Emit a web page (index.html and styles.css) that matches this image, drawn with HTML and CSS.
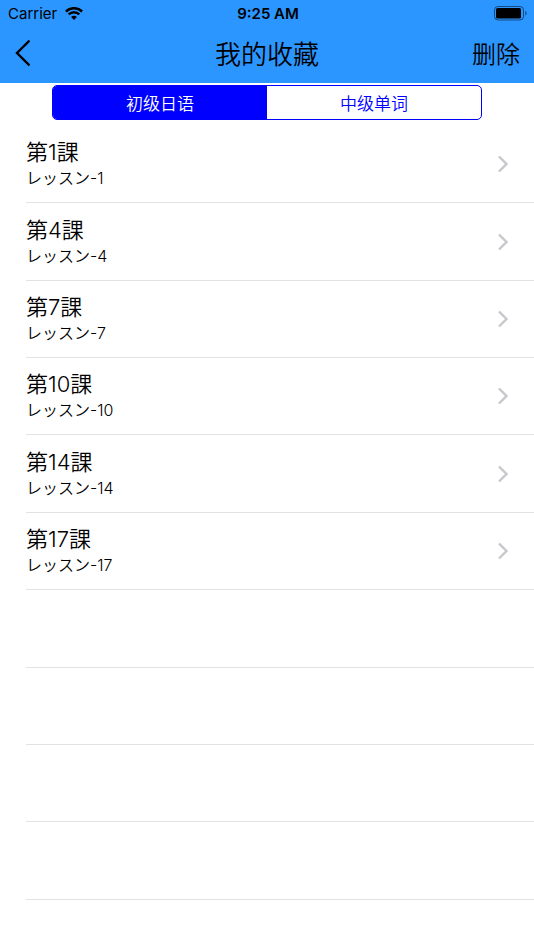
FILE: index.html
```html
<!DOCTYPE html>
<html lang="zh-CN">
<head>
<meta charset="utf-8">
<meta name="viewport" content="width=device-width, initial-scale=1">
<title>我的收藏</title>
<link rel="stylesheet" href="styles.css">
</head>
<body>
<header class="top">
  <div class="status">
    <div class="carrier">
      <span>Carrier</span>
      <svg class="wifi" viewBox="0 0 18 13" aria-hidden="true">
        <path d="M.9 4.5a11.6 11.6 0 0 1 16.2 0M3.7 7.4a7.6 7.6 0 0 1 10.6 0" fill="none" stroke="#000" stroke-width="2.5"/>
        <path d="M6.1 10a4 4 0 0 1 5.8 0L9 12.9z"/>
      </svg>
    </div>
    <span class="time">9:25 AM</span>
    <svg class="battery" viewBox="0 0 34 15" aria-hidden="true">
      <rect x="0.5" y="0.5" width="29" height="13.5" rx="3.5" fill="none" stroke="#000" stroke-opacity=".5"/>
      <rect x="2" y="2" width="25" height="10.5" rx="1.5"/>
      <path d="M31.3 5c1.8.7 1.8 4 0 4.7z" fill-opacity=".5"/>
    </svg>
  </div>
  <nav class="bar">
    <button class="back" type="button" aria-label="返回">
      <svg viewBox="0 0 16 28" aria-hidden="true"><path d="M15.5 1.5 3 14l12.5 12.5" fill="none" stroke="#000" stroke-width="2.4"/></svg>
    </button>
    <h1>我的收藏</h1>
    <button class="remove" type="button">删除</button>
  </nav>
</header>
<main>
  <div class="segments">
    <button class="segment selected" type="button" aria-pressed="true">初级日语</button>
    <button class="segment" type="button" aria-pressed="false">中级单词</button>
  </div>
  <ul class="list" lang="ja">
    <li><a href="#1"><span class="text"><span class="name">第1課</span><span class="sub">レッスン-1</span></span><svg class="chevron" viewBox="0 0 12 18" aria-hidden="true"><path d="m2 1.5 7.5 7.5L2 16.5"/></svg></a></li>
    <li><a href="#4"><span class="text"><span class="name">第4課</span><span class="sub">レッスン-4</span></span><svg class="chevron" viewBox="0 0 12 18" aria-hidden="true"><path d="m2 1.5 7.5 7.5L2 16.5"/></svg></a></li>
    <li><a href="#7"><span class="text"><span class="name">第7課</span><span class="sub">レッスン-7</span></span><svg class="chevron" viewBox="0 0 12 18" aria-hidden="true"><path d="m2 1.5 7.5 7.5L2 16.5"/></svg></a></li>
    <li><a href="#10"><span class="text"><span class="name">第10課</span><span class="sub">レッスン-10</span></span><svg class="chevron" viewBox="0 0 12 18" aria-hidden="true"><path d="m2 1.5 7.5 7.5L2 16.5"/></svg></a></li>
    <li><a href="#14"><span class="text"><span class="name">第14課</span><span class="sub">レッスン-14</span></span><svg class="chevron" viewBox="0 0 12 18" aria-hidden="true"><path d="m2 1.5 7.5 7.5L2 16.5"/></svg></a></li>
    <li><a href="#17"><span class="text"><span class="name">第17課</span><span class="sub">レッスン-17</span></span><svg class="chevron" viewBox="0 0 12 18" aria-hidden="true"><path d="m2 1.5 7.5 7.5L2 16.5"/></svg></a></li>
    <li></li>
    <li></li>
    <li></li>
    <li></li>
  </ul>
</main>
</body>
</html>
```
FILE: styles.css
```css
* {
  box-sizing: border-box;
}

body {
  margin: 0;
  background: #fff;
  color: #000;
  font-family: Inter, "Noto Sans CJK SC", sans-serif;
}

button {
  margin: 0;
  padding: 0;
  border: 0;
  background: none;
  color: inherit;
  font: inherit;
}

svg {
  display: block;
}

.top {
  background: #2b96ff;
}

.status,
.bar {
  display: grid;
  grid-template-columns: 1fr auto 1fr;
  align-items: center;
}

.status {
  height: 27px;
  padding: 0 6px 0 8px;
  font-size: 15px;
  line-height: 27px;
}

.carrier {
  display: flex;
  align-items: center;
  gap: 8px;
}

.wifi {
  width: 18px;
  height: 13px;
}

.time {
  font-weight: 600;
}

.battery {
  width: 34px;
  height: 15px;
  justify-self: end;
}

.bar {
  height: 56px;
  padding: 0 14px;
}

.bar h1 {
  margin: 0;
  font-size: 26px;
  font-weight: 350;
  line-height: 56px;
}

.back {
  justify-self: start;
  padding-bottom: 4px;
}

.back svg {
  width: 16px;
  height: 28px;
}

.remove {
  justify-self: end;
  font-size: 24px;
  font-weight: 350;
  line-height: 56px;
}

.segments {
  display: flex;
  height: 35px;
  margin: 2px 52px 6px;
  border: 1px solid #00f;
  border-radius: 5px;
  overflow: hidden;
}

.segment {
  flex: 1;
  color: #00f;
  font-size: 17px;
  font-weight: 350;
}

.segment.selected {
  background: #00f;
  color: #fff;
}

.list {
  margin: 0;
  padding: 0 0 0 26px;
  list-style: none;
  font-family: Inter, "Noto Sans CJK JP", sans-serif;
  font-weight: 350;
}

.list li {
  height: 77px;
  border-bottom: 1px solid #e2e2e4;
}

.list li:nth-child(5n + 2),
.list li:nth-child(5n) {
  height: 78px;
}

.list a {
  display: flex;
  align-items: center;
  justify-content: space-between;
  height: 100%;
  padding-right: 25px;
  color: inherit;
  text-decoration: none;
}

.text {
  display: flex;
  flex-direction: column;
}

.name {
  font-size: 22px;
  line-height: 28px;
}

.sub {
  font-size: 16px;
  line-height: 24px;
}

.chevron {
  width: 12px;
  height: 18px;
  fill: none;
  stroke: #c7c7cc;
  stroke-width: 2.4;
}
```
